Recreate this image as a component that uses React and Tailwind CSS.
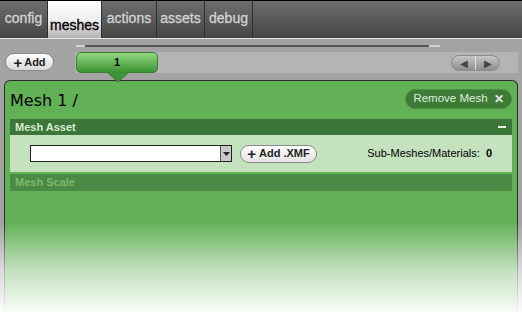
import React from "react";

const tabs = [
    { label: "config", w: "w-[48px]" },
    { label: "meshes", w: "w-[54px]" },
    { label: "actions", w: "w-[55px]" },
    { label: "assets", w: "w-[48px]" },
    { label: "debug", w: "w-[48px]" },
];

function Tab({ label, w, active }) {
    if (active) {
        return (
            <div className={`${w} h-[37px] flex items-end justify-center pb-[2px] border-r border-[#2e2e2e] bg-gradient-to-b from-[#ffffff] via-[#efefef] to-[#b2b2b2] text-black text-[14px] [-webkit-text-stroke:0.3px_black]`}>
                {label}
            </div>
        );
    }
    return (
        <div className={`${w} h-[37px] flex items-start justify-center pt-[7px] border-r border-[#2e2e2e] text-[#d2d2d2] text-[14px] [-webkit-text-stroke:0.3px_#d2d2d2]`}>
            {label}
        </div>
    );
}

export default function App() {
    return (
        <div className="relative w-[522px] h-[333px] overflow-hidden bg-[#a3a3a3] font-['Liberation_Sans',sans-serif]">
            {/* top tabs */}
            <div className="h-[38px] border-t border-black bg-gradient-to-b from-[#6e6e6e] to-[#464646] flex">
                {tabs.map((t) => (
                    <Tab key={t.label} label={t.label} w={t.w} active={t.label === "meshes"} />
                ))}
            </div>
            <div className="h-px bg-[#e6e6e6]" />

            {/* scroll line */}
            <div className="h-[13px] pt-[6px] pl-[76px]">
                <div className="flex w-[364px] h-[2px]">
                    <div className="w-[9px] bg-[#d4d4d4]" />
                    <div className="flex-1 bg-[#575757]" />
                    <div className="w-[11px] bg-[#d4d4d4]" />
                </div>
            </div>

            {/* strip */}
            <div className="flex items-start h-[28px]">
                <button className="ml-[5px] mt-[1px] w-[49px] h-[18px] rounded-full border border-[#8a8a8a] bg-gradient-to-b from-[#ffffff] to-[#d9d9d9] flex items-center justify-center gap-[2px] text-[11px] font-bold text-[#222]">
                    <span className="text-[15px] leading-none font-bold">+</span>Add
                </button>
                <div className="ml-[21px] w-[443px] h-[21px] bg-[#b4b4b4] flex items-start">
                    <div className="relative w-[82px] h-[21px] ml-px">
                        <div className="w-full h-full rounded-[5px] border border-[#3f7a37] bg-gradient-to-b from-[#91d881] to-[#3b9534] flex items-center justify-center text-[11px] font-bold text-black">
                            1
                        </div>
                        <svg className="absolute left-[31px] top-[20px]" width="22" height="11" viewBox="0 0 22 11">
                            <path d="M0 0 L22 0 L11 10 Z" fill="#3b9534" stroke="#2f6e2a" strokeWidth="0.8" />
                            <path d="M0.5 0 L21.5 0" stroke="#3b9534" strokeWidth="1.5" />
                        </svg>
                    </div>
                    <div className="ml-auto mr-[18px] mt-[3px] flex h-[16px] rounded-full border border-[#8c8c8c] bg-gradient-to-b from-[#c6c6c6] to-[#8e8e8e] overflow-hidden">
                        <div className="w-[24px] flex items-center justify-center border-r border-[#e0e0e0] text-[#444] text-[10px]">◀</div>
                        <div className="w-[23px] flex items-center justify-center text-[#444] text-[10px]">▶</div>
                    </div>
                </div>
            </div>

            {/* mesh panel */}
            <div className="mx-[4px] h-[260px] rounded-t-[6px] border border-[#2b2b2b] border-b-0 bg-[#63b157] px-[5px]">
                <div className="h-[38px] flex items-start justify-between">
                    <div className="mt-[10px] text-[16px] leading-[20px] text-black font-['DejaVu_Sans',sans-serif]">Mesh 1 /</div>
                    <button className="mt-[8px] w-[107px] h-[20px] rounded-full bg-[#3e7b37] border border-[#4b8f43] flex items-center justify-center gap-[6px] text-[11.5px] text-[#dfeedd]">
                        Remove Mesh
                        <span className="text-[12px] font-bold text-[#e8e8e8]">✕</span>
                    </button>
                </div>
                <div className="h-[16px] bg-[#3c763a] flex items-center justify-between px-[5px] text-[11px] font-bold text-[#d6ebd2]">
                    <span>Mesh Asset</span>
                    <span className="w-[8px] h-[2px] bg-[#e6f2e3] mr-[1px]" />
                </div>
                <div className="h-[37px] bg-[#c4e2be] flex items-center pl-[20px] pr-[20px]">
                    <div className="w-[202px] h-[17px] border border-[#222] bg-white flex justify-end">
                        <div className="w-[11px] h-full bg-[#c9c9c9] border-l border-[#555] flex items-center justify-center">
                            <svg width="7" height="4" viewBox="0 0 7 4"><path d="M0 0 L7 0 L3.5 4 Z" fill="#222" /></svg>
                        </div>
                    </div>
                    <button className="ml-[8px] w-[77px] h-[18px] rounded-full border border-[#8a8a8a] bg-gradient-to-b from-[#ffffff] to-[#e2e2e2] flex items-center justify-center gap-[3px] text-[11px] font-bold text-[#222]">
                        <span className="text-[15px] leading-none font-bold">+</span>Add .XMF
                    </button>
                    <div className="ml-auto text-[11px] text-black">
                        Sub-Meshes/Materials:&nbsp;&nbsp;<b>0</b>
                    </div>
                </div>
                <div className="mt-[2px] h-[17px] bg-[#4b8a44] flex items-center px-[5px] text-[11px] font-bold text-[#7bb96e]">
                    Mesh Scale
                </div>
            </div>

            {/* bottom fade */}
            <div className="absolute left-0 right-0 top-[222px] h-[94px] bg-gradient-to-b from-[rgba(255,255,255,0)] via-[rgba(255,255,255,0.6)] to-white" />
            <div className="absolute left-0 right-0 top-[315px] bottom-0 bg-white" />
        </div>
    );
}
